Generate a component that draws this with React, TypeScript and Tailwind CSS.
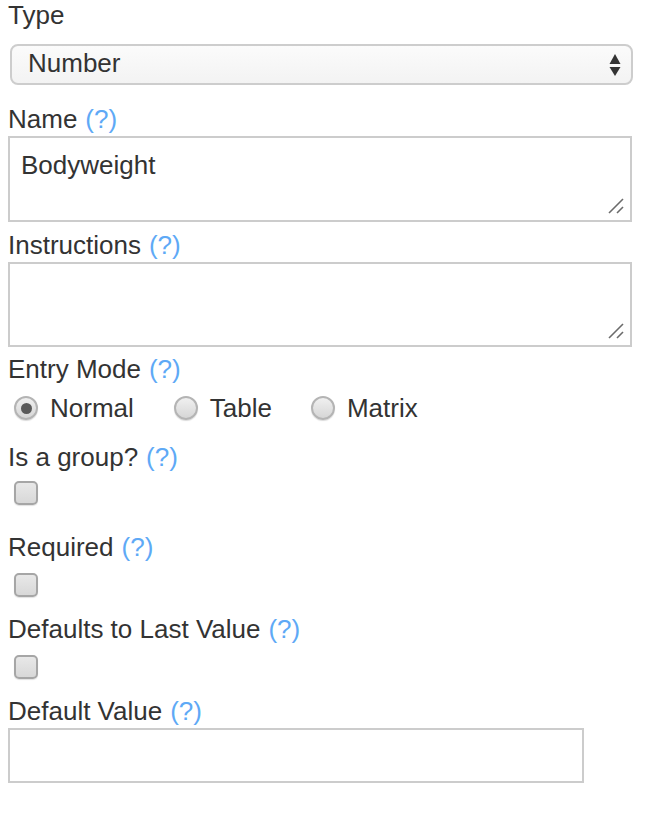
import React from "react";

function Help() {
  return <span className="ml-[8px] text-[#5ea9f6]">(?)</span>;
}

function Label({ text, help = true, className = "" }: { text: string; help?: boolean; className?: string }) {
  return (
    <div className={"h-[30px] pl-[8px] leading-[30px] whitespace-nowrap " + className}>
      {text}
      {help && <Help />}
    </div>
  );
}

function Resizer() {
  return (
    <svg className="absolute right-[6px] bottom-[6px]" width="16" height="16" viewBox="0 0 16 16">
      <line x1="1" y1="15" x2="15" y2="1" stroke="#6b6b6b" strokeWidth="1.6" />
      <line x1="9" y1="15" x2="15" y2="9" stroke="#6b6b6b" strokeWidth="1.6" />
    </svg>
  );
}

function TextBox({ value, height }: { value?: string; height: string }) {
  return (
    <div className={"relative ml-[8px] w-[624px] border-2 border-[#cccccc] bg-white " + height}>
      <div className="pl-[11px] pt-[12px] leading-[30px]">{value}</div>
      <Resizer />
    </div>
  );
}

function Radio({ checked, label, className = "" }: { checked?: boolean; label: string; className?: string }) {
  return (
    <div className={"flex items-center " + className}>
      <span className="flex h-[24px] w-[24px] items-center justify-center rounded-full border-2 border-[#b4b4b4] bg-gradient-to-b from-[#f0f0f0] to-[#d6d6d6] shadow-[0_1px_1px_rgba(0,0,0,0.15)]">
        {checked && <span className="h-[11px] w-[11px] rounded-full bg-[#5a5a5a]" />}
      </span>
      <span className="ml-[12px] leading-[30px]">{label}</span>
    </div>
  );
}

function Checkbox({ className = "" }: { className?: string }) {
  return (
    <div
      className={
        "ml-[14px] h-[24px] w-[24px] rounded-[5px] border-2 border-[#a6a6a6] bg-gradient-to-b from-[#e8e8e8] to-[#d8d8d8] shadow-[0_1px_1px_rgba(0,0,0,0.12)] " +
        className
      }
    />
  );
}

export default function App() {
  return (
    <div className="h-[818px] w-[648px] bg-white text-[26px] text-[#333333]" style={{ fontFamily: '"Liberation Sans", Arial, sans-serif' }}>
      <Label text="Type" help={false} />

      <div className="relative ml-[10px] mt-[14px] flex h-[41px] w-[623px] items-center rounded-[8px] border-2 border-[#cdcdcd] bg-gradient-to-b from-[#fbfbfb] to-[#f3f3f3]">
        <span className="pl-[16px] pb-[3px] leading-[30px]">Number</span>
        <svg className="absolute right-[10px] top-[7px]" width="12" height="24" viewBox="0 0 12 24">
          <polygon points="6,1 11.5,11 0.5,11" fill="#333" />
          <polygon points="0.5,14 11.5,14 6,23" fill="#333" />
        </svg>
      </div>

      <Label text="Name" className="mt-[19px]" />
      <TextBox value="Bodyweight" height="h-[86px] mt-[2px]" />

      <Label text="Instructions" className="mt-[8px]" />
      <TextBox height="h-[85px] mt-[2px]" />

      <Label text="Entry Mode" className="mt-[7px]" />
      <div className="mt-[9px] flex h-[30px] items-center">
        <Radio checked label="Normal" className="ml-[14px]" />
        <Radio label="Table" className="ml-[40px]" />
        <Radio label="Matrix" className="ml-[39px]" />
      </div>

      <Label text="Is a group?" className="mt-[19px]" />
      <Checkbox className="mt-[9px]" />

      <Label text="Required" className="mt-[27px]" />
      <Checkbox className="mt-[11px]" />

      <Label text="Defaults to Last Value" className="mt-[17px]" />
      <Checkbox className="mt-[11px]" />

      <Label text="Default Value" className="mt-[17px]" />
      <div className="ml-[8px] mt-[2px] h-[55px] w-[576px] border-2 border-[#cccccc] bg-white" />
    </div>
  );
}
